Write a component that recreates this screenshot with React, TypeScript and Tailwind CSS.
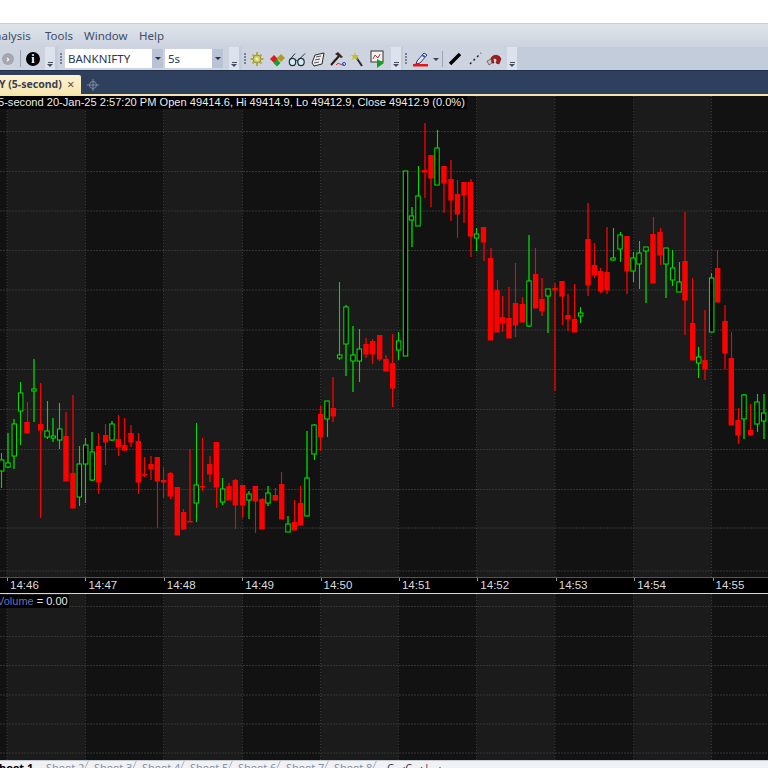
type Candle = [number, number, number, number, number, "r" | "g", number?]

// x, wick top, wick bottom, body top, body bottom, colour, half-pixel wick
const candles: Candle[] = [
  [1.7, 453, 488, 460, 471, "g"], [8, 433, 468, 463, 467, "g", 1], [14.3, 419, 469, 424, 456, "g", 1],
  [20.7, 382, 445, 393, 411, "g"], [27, 402, 433, 422, 433, "r"], [34, 359, 422, 389, 391, "g", 1],
  [40.7, 383, 518, 424, 430, "r"], [47, 401, 439, 431, 437, "g"], [53.3, 418, 442, 436, 438, "g", 1],
  [59.7, 403, 449, 429, 440, "g"], [66, 412, 481, 436, 481, "r", 1], [73, 395, 508, 473, 508, "r", 1],
  [79.3, 446, 506, 464, 497, "g"], [85.7, 438, 503, 445, 464, "g"], [92.3, 432, 481, 452, 480, "g", 1],
  [98.7, 433, 494, 446, 482, "r"], [105.7, 424, 465, 435, 442, "r"], [112, 421, 441, 424, 440, "g", 1],
  [118.3, 415, 456, 439, 447, "r"], [124.7, 418, 451, 445, 450, "r"], [131, 425, 447, 433, 442, "r", 1],
  [138.3, 433, 494, 441, 482, "r"], [144.7, 457, 477, 474, 475, "r"], [151, 456, 480, 464, 469, "r", 1],
  [157.3, 457, 528, 457, 481, "r"], [163.7, 467, 498, 480, 482, "r"], [170.3, 472, 499, 473, 496, "r"],
  [177.3, 487, 535, 487, 535, "r"], [183.7, 509, 530, 512, 529, "r"], [190, 449, 522, 521, 522, "r", 1],
  [196.3, 423, 522, 485, 503, "g"], [202.7, 438, 491, 486, 487, "r"], [209.7, 456, 482, 464, 474, "r", 1],
  [216.3, 442, 508, 442, 487, "r"], [222.7, 478, 505, 489, 502, "g"], [229, 483, 500, 486, 500, "r", 1],
  [235.3, 479, 529, 480, 505, "r"], [242.7, 485, 518, 485, 505, "r"], [249, 491, 519, 494, 500, "g", 1],
  [255.3, 486, 533, 486, 501, "r"], [262, 498, 529, 499, 529, "r"], [268, 486, 506, 493, 503, "g", 1],
  [275.3, 488, 501, 495, 500, "r"], [281.7, 472, 519, 484, 519, "r"], [288, 516, 532, 524, 532, "g", 1],
  [294.3, 500, 530, 522, 530, "r"], [300.7, 486, 525, 503, 525, "r"], [307, 431, 516, 478, 516, "g", 1],
  [314, 424, 460, 425, 454, "g"], [320.7, 406, 451, 414, 437, "r"], [327, 401, 437, 401, 419, "g"],
  [333.3, 377, 422, 408, 416, "r", 1], [339.7, 282, 360, 355, 358, "g"], [346, 305, 376, 307, 344, "g", 1],
  [353, 326, 392, 355, 361, "g", 1], [359.3, 329, 382, 349, 361, "g"], [366, 338, 358, 344, 354, "r", 1],
  [372.7, 339, 364, 341, 354, "r"], [379.7, 335, 361, 335, 359, "r"], [386, 355, 371, 359, 371, "r", 1],
  [392.7, 334, 407, 363, 388, "r"], [398.7, 332, 360, 341, 350, "g"], [405.5, 171, 356, 171, 356, "g", 1],
  [411.5, 207, 247, 216, 220, "g", 1], [418, 166, 196, 196, 226, "g"], [424.6, 123, 198, 170, 172, "r", 1],
  [431, 155, 207, 155, 178, "r", 1], [437, 130, 148, 148, 185, "g"], [444, 166, 213, 166, 183, "r", 1],
  [451, 160, 221, 179, 200, "r", 1], [457.5, 180, 238, 194, 214, "r"], [464, 182, 223, 182, 195, "r", 1],
  [470.5, 179, 257, 182, 236, "r", 1], [476.5, 228, 251, 234, 238, "g"], [483.5, 227, 261, 227, 242, "r", 1],
  [490.5, 248, 340, 258, 340, "r", 1], [497, 280, 332, 290, 332, "r"], [502.7, 296, 332, 317, 323, "r"],
  [509, 287, 338, 318, 338, "r", 1], [515.5, 263, 337, 303, 325, "r"], [522.3, 297, 322, 304, 322, "r"],
  [529, 235, 327, 281, 326, "g", 1], [535.7, 248, 308, 274, 308, "r"], [542, 278, 316, 299, 311, "r", 1],
  [548, 289, 333, 289, 296, "g", 1], [555, 283, 391, 288, 290, "r", 1], [562, 281, 325, 281, 296, "r"],
  [568, 294, 331, 315, 319, "r", 1], [574.6, 284, 332, 319, 332, "r"], [580.7, 307, 323, 313, 316, "g"],
  [588, 203, 296, 239, 285, "r", 1], [594.7, 243, 278, 265, 275, "r"], [600.7, 268, 293, 271, 291, "r"],
  [607, 227, 294, 272, 290, "r", 1], [613, 228, 261, 258, 260, "g"], [620, 232, 262, 235, 249, "g"],
  [627, 236, 294, 236, 271, "r", 1], [633, 252, 282, 258, 271, "g"], [639, 241, 289, 253, 264, "g"],
  [646, 247, 303, 247, 251, "g", 1], [653, 217, 283, 234, 283, "r"], [660, 228, 265, 232, 255, "r"],
  [666, 248, 298, 248, 264, "g", 1], [672.7, 250, 286, 268, 280, "g"], [679, 262, 292, 282, 292, "g"],
  [685, 212, 335, 261, 300, "r", 1], [692.7, 278, 360, 323, 360, "r"], [698.7, 347, 378, 357, 363, "g"],
  [705, 310, 380, 360, 369, "r", 1], [711.7, 273, 332, 278, 332, "g"], [717.7, 250, 302, 268, 302, "r"],
  [725, 305, 369, 321, 353, "r", 1], [731.3, 332, 425, 358, 425, "r"], [738, 408, 444, 420, 435, "r"],
  [744, 394, 439, 395, 419, "g", 1], [750.7, 404, 436, 430, 435, "r"], [757, 394, 432, 402, 424, "g"],
  [763.7, 394, 439, 413, 421, "g", 1],
]

const gridX = [7, 85.5, 163.5, 242.5, 320.5, 398.5, 476.5, 555, 633.5, 711.5]
const times = ["14:46", "14:47", "14:48", "14:49", "14:50", "14:51", "14:52", "14:53", "14:54", "14:55"]
const sheets = [2, 3, 4, 5, 6, 7, 8]

function Bands({ height, rows, top }: { height: number; rows: number[]; top: number }) {
  return (
    <svg width="768" height={height} className="block">
      <rect width="768" height={height} fill="#121212" />
      {[0, 2, 4, 6, 8].map((n) => (
        <rect key={n} x={gridX[n]} width={gridX[n + 1] - gridX[n]} height={height} fill="#1b1b1b" />
      ))}
      {gridX.map((x) => (
        <line key={x} x1={x} x2={x} y1="0" y2={height} stroke="#383838" strokeDasharray="1 2" />
      ))}
      {rows.map((y) => (
        <line key={y} x1="0" x2="768" y1={y - top} y2={y - top} stroke="#343434" strokeDasharray="2 1" />
      ))}
    </svg>
  )
}

function Candles({ top }: { top: number }) {
  return (
    <svg width="768" height="481" className="absolute left-0 top-0">
      {candles.map(([x, hi, lo, open, close, kind, half]) => {
        const color = kind === "r" ? "#ff0000" : "#00dc00"
        const wx = half ? Math.round(x) : Math.floor(x) + 0.5
        const h = Math.max(close - open, 1)
        return (
          <g key={x}>
            <line x1={wx} x2={wx} y1={hi - top} y2={lo - top} stroke={color} strokeWidth={half ? 1.3 : 1.1} />
            {kind === "r" ? (
              <rect x={x - 2.7} y={open - top} width="5.4" height={h + 0.5} fill={color} />
            ) : (
              <rect x={x - 2.2} y={open - top} width="4.4" height={h} fill="#000" stroke={color} strokeWidth="1.1" />
            )}
          </g>
        )
      })}
    </svg>
  )
}

function Overflow() {
  return (
    <div className="flex h-[23px] w-[10px] flex-col items-center justify-end gap-px bg-[#dde3ec] pb-[3px]">
      <div className="h-px w-[5px] bg-[#44505f]" />
      <div className="h-0 w-0 border-x-[3px] border-t-[3px] border-x-transparent border-t-[#44505f]" />
    </div>
  )
}

function Grip() {
  return (
    <div className="flex h-[23px] w-[6px] flex-col items-center justify-center gap-px">
      {[0, 1, 2, 3].map((n) => (
        <div key={n} className="h-[2px] w-[2px] bg-[#75829a]" />
      ))}
    </div>
  )
}

function Combo({ label, width }: { label: string; width: string }) {
  return (
    <div className={`flex h-[19px] items-center bg-white ${width}`}>
      <span className="flex-1 pl-[3px] text-[11.5px] text-[#2c3a52]">{label}</span>
      <div className="flex h-full w-[11px] items-center justify-center bg-[#b8c4d6]">
        <div className="h-0 w-0 border-x-[3px] border-t-[3px] border-x-transparent border-t-[#27303e]" />
      </div>
    </div>
  )
}

function ToolIcons() {
  return (
    <svg width="140" height="20" viewBox="0 0 140 20" className="block">
      {/* gear */}
      <path d="M8 3v14M1.5 10h13M3.5 5.5l9 9M12.5 5.5l-9 9" stroke="#b4ae3c" strokeWidth="2" />
      <circle cx="8" cy="10" r="4" fill="#cfc95a" stroke="#8a8640" strokeWidth=".8" />
      <circle cx="8" cy="10" r="1.8" fill="#ecebb8" />
      {/* diamonds */}
      <path d="M25 6l4 4-4 4-4-4z" fill="#e31b1b" />
      <path d="M32 5l4 4-4 4-4-4z" fill="#a8a020" />
      <path d="M28 10l3.5 4-3.5 3.5-3.5-3.5z" fill="#18a030" />
      {/* glasses */}
      <ellipse cx="43.5" cy="13" rx="3.2" ry="3.6" fill="#d3eef0" stroke="#20303c" strokeWidth="1.2" />
      <ellipse cx="52" cy="13" rx="3.2" ry="3.6" fill="#d3eef0" stroke="#20303c" strokeWidth="1.2" />
      <path d="M46.5 12q1-1 2.5 0M41 10.5l5-6M50 10.5l6-6" fill="none" stroke="#20303c" strokeWidth="1" />
      {/* notebook */}
      <path d="M63 14l3-8 9-2-2 11-8 2z" fill="#f0f0f0" stroke="#2b2b2b" />
      <path d="M67 8l5-1M66 11l5-1M65 14l5-1" stroke="#555" />
      {/* hammer with scribble */}
      <path d="M82 16l8-9" stroke="#251a14" strokeWidth="2" />
      <path d="M86 5l3-2 5 5-2 1-3-2z" fill="#3a2a18" />
      <path d="M87 16q2-3 4-1t4 0" fill="none" stroke="#d03030" />
      <circle cx="95" cy="15" r="1.6" fill="none" stroke="#3050c0" />
      {/* wand */}
      <path d="M107 8l6 9" stroke="#2a2a2a" strokeWidth="2" />
      <path d="M106 3l1 3 3 0-2 2 1 3-3-2-3 2 1-3-2-2 3 0z" fill="#c8c020" />
      {/* chart with play */}
      <rect x="122" y="2" width="12" height="11" fill="#f2f2f2" stroke="#333" />
      <path d="M124 10l2-4 3 3 2-4" fill="none" stroke="#c03030" />
      <path d="M128 10l7 4-7 5z" fill="#12a020" />
    </svg>
  )
}

export default function App() {
  return (
    <div className="flex h-[768px] w-[768px] flex-col overflow-hidden bg-white font-['Noto_Sans',sans-serif]">
      <div className="h-6 shrink-0 border-b border-[#c8ced8] bg-white" />
      <div className="flex h-[23px] shrink-0 items-center bg-gradient-to-b from-[#e0e4eb] to-[#ccd3df] text-[11.5px] text-[#414e69]">
        <span className="ml-[-13px] w-[58px]">Analysis</span>
        <span className="w-[39px]">Tools</span>
        <span className="w-[55px]">Window</span>
        <span>Help</span>
      </div>
      <div className="flex h-[23px] shrink-0 items-center bg-[#c3ccda]">
        <div className="flex h-full w-[55px] items-center bg-[#cdd4e0]">
          <div className="ml-[2px] flex h-[12px] w-[12px] items-center justify-center rounded-full bg-[#a4a8ae] text-[9px] font-bold leading-none text-white">›</div>
          <div className="ml-[6px] h-[17px] w-px bg-[#98a3b5]" />
          <div className="ml-[5px] flex h-[14px] w-[14px] items-center justify-center rounded-full bg-black font-['Liberation_Serif',serif] text-[12px] font-bold leading-none text-white">i</div>
          <div className="ml-auto"><Overflow /></div>
        </div>
        <div className="ml-[3px] flex h-full w-[181px] items-center bg-[#cdd4e0]">
          <Grip />
          <div className="ml-[1px]"><Combo label="BANKNIFTY" width="w-[98px]" /></div>
          <div className="ml-[2px]"><Combo label="5s" width="w-[58px]" /></div>
          <div className="ml-auto"><Overflow /></div>
        </div>
        <div className="ml-[3px] flex h-full w-[159px] items-center bg-[#cdd4e0]">
          <Grip />
          <div className="ml-[1px]"><ToolIcons /></div>
          <div className="ml-auto"><Overflow /></div>
        </div>
        <div className="ml-[2px] flex h-full w-[114px] items-center bg-[#cdd4e0]">
          <Grip />
          <svg width="94" height="20" viewBox="0 0 94 20" className="ml-[3px] block">
            <path d="M5 12l7-8 3 2-7 8-4 1z" fill="#e8e8f0" stroke="#2a3a70" />
            <path d="M10 6l3 2" stroke="#3858c8" strokeWidth="2" />
            <rect x="1" y="15" width="15" height="2.5" fill="#e81818" />
            <path d="M21 9h6l-3 3z" fill="#3a4454" />
            <line x1="30.5" x2="30.5" y1="2" y2="18" stroke="#98a3b5" />
            <path d="M38 15l10-10" stroke="#000" strokeWidth="3.4" />
            <path d="M58 15l11-11" stroke="#222" strokeWidth="1.5" strokeDasharray="2 3" />
            <path d="M80 14l-1-5a5.5 5.5 0 0 1 10 1l-2 5-3-1 1-3a2.5 2.5 0 0 0-4-1l1 4z" fill="#b01818" stroke="#501010" strokeWidth=".6" />
            <path d="M75 12l4-2 1 4-3 2z" fill="#c8c8c8" stroke="#333" strokeWidth=".6" />
          </svg>
          <div className="ml-auto"><Overflow /></div>
        </div>
      </div>
      <div className="flex h-6 shrink-0 items-end border-t border-[#222f48] bg-[#2f3f5e]">
        <div className="flex h-[19px] w-[81px] items-center overflow-hidden rounded-tr-[2px] bg-gradient-to-b from-[#fdf3d2] to-[#f8e7b0] text-[10.5px] font-bold text-[#3a4050]">
          <span className="ml-[-1px] w-[68px] shrink-0 whitespace-nowrap">Y (5-second)</span>
          <span className="text-[13px] font-normal leading-none text-[#555]">×</span>
        </div>
        <svg width="14" height="14" viewBox="0 0 14 14" className="mb-[2px] ml-[5px] block">
          <circle cx="7" cy="7" r="3.5" fill="none" stroke="#7e8a9e" />
          <path d="M7 1v12M1 7h12" stroke="#7e8a9e" />
        </svg>
      </div>
      <div className="h-[2px] shrink-0 bg-[#f6e3a8]" />
      <div className="relative h-[481px] shrink-0 overflow-hidden bg-black">
        <Bands height={481} rows={[131.5, 171.5, 211, 250.5, 290, 330, 369.5, 409.5, 449.5, 489.5, 528, 571]} top={96} />
        <Candles top={96} />
        <div className="absolute left-0 top-0 h-[13px] w-[467px] overflow-hidden whitespace-nowrap bg-black font-['Liberation_Sans',sans-serif] text-[11.1px] leading-[13px] text-[#ececec]">
          <span className="ml-[-2px]">5-second 20-Jan-25 2:57:20 PM Open 49414.6, Hi 49414.9, Lo 49412.9, Close 49412.9 (0.0%)</span>
        </div>
      </div>
      <div className="flex h-[16px] shrink-0 border-t border-[#555] bg-black font-['Liberation_Sans',sans-serif] text-[11.5px] leading-[15px] text-[#dcdcdc]">
        <div className="w-[7px] shrink-0" />
        {times.map((time) => (
          <div key={time} className="w-[78.4px] shrink-0 border-l border-[#888] pl-[2px] [border-image:linear-gradient(#999_4px,transparent_4px)_1]">{time}</div>
        ))}
      </div>
      <div className="h-px shrink-0 bg-[#d8d8d8]" />
      <div className="relative h-[166px] shrink-0 overflow-hidden">
        <Bands height={166} rows={[606.5, 636.5, 665.5, 695, 724, 753]} top={594} />
        <div className="absolute left-0 top-px h-[13px] w-[69px] overflow-hidden whitespace-nowrap bg-black font-['Liberation_Sans',sans-serif] text-[11px] leading-[13px] text-[#e8e8e8]">
          <span className="ml-[-3px] text-[#6270c0]">Volume</span> = 0.00
        </div>
      </div>
      <div className="flex h-[8px] shrink-0 items-start overflow-hidden border-t border-[#c4c9d2] bg-[#eff1f5] text-[11px] leading-[14px] text-[#8590a3]">
        <div className="ml-[-7px] w-[48px] shrink-0 font-bold text-black">Sheet 1</div>
        {sheets.map((n) => (
          <div key={n} className="flex w-[48px] shrink-0 justify-between pl-[5px]">
            <span>Sheet {n}</span>
            <div className="mr-[2px] h-[8px] w-px -skew-x-[25deg] bg-[#a9b0bd]" />
          </div>
        ))}
        <div className="ml-[10px] flex items-start gap-[8px] text-[#3a4252]">
          <span>C</span>
          <span>‹C</span>
          <span>›|</span>
          <span>‹</span>
        </div>
      </div>
    </div>
  )
}
